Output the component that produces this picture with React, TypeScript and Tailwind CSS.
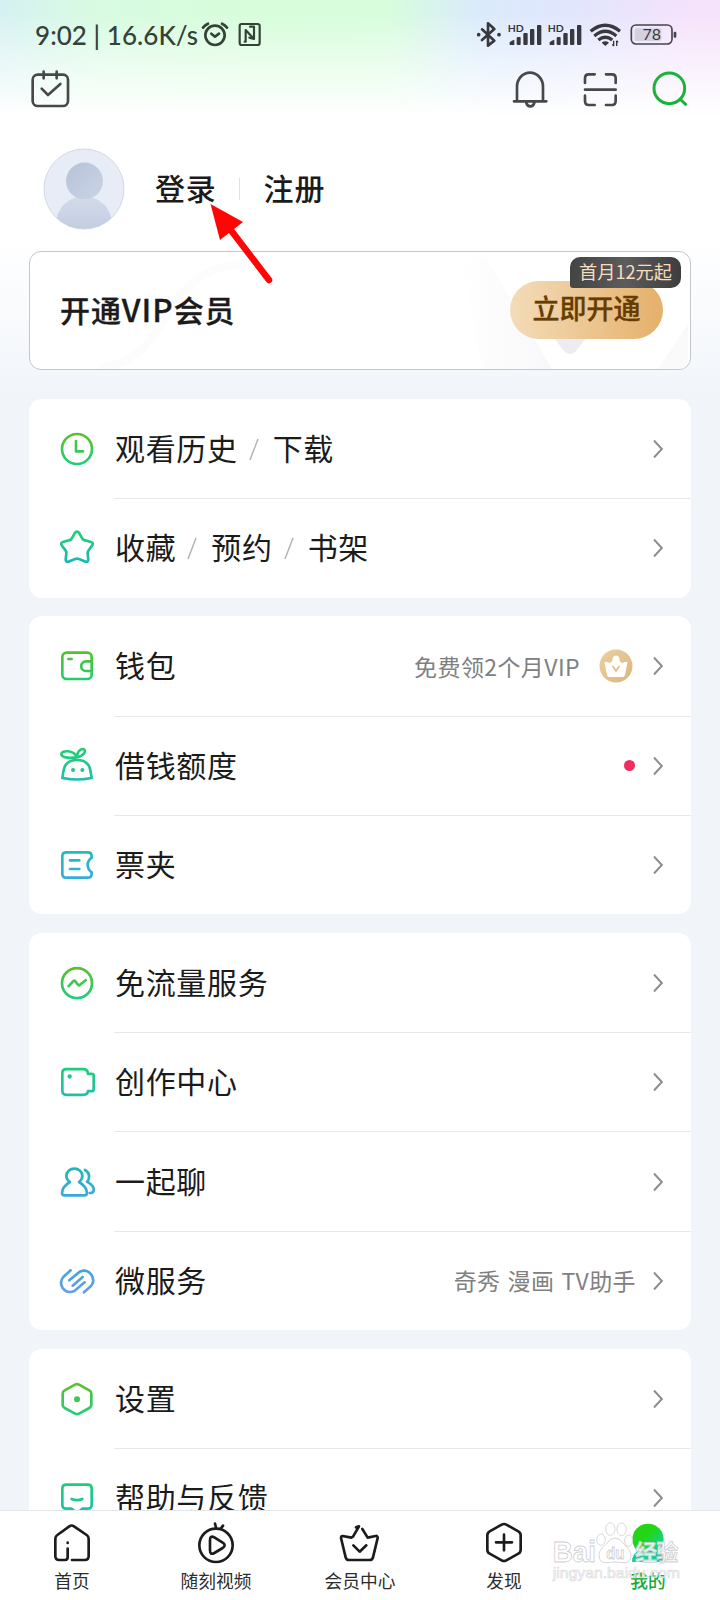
import type { ReactNode } from "react";

type IconProps = {
  viewBox: string;
  from: string;
  to: string;
  id: string;
  children: ReactNode;
};

type RowProps = {
  icon: ReactNode;
  labels: string[];
  extra?: ReactNode;
};

// Outline icon with a vertical gradient stroke
function GradientIcon({ viewBox, from, to, id, children }: IconProps) {
  const top = Number(viewBox.split(" ")[1]);

  return (
    <svg
      viewBox={viewBox}
      className="h-12 w-12 shrink-0"
      fill="none"
      stroke={`url(#${id})`}
      strokeWidth="8"
      strokeLinecap="round"
      strokeLinejoin="round"
    >
      <defs>
        <linearGradient
          id={id}
          gradientUnits="userSpaceOnUse"
          x1="0"
          x2="0"
          y1={top + 25}
          y2={top + 119}
        >
          <stop stopColor={from} />
          <stop offset="1" stopColor={to} />
        </linearGradient>
      </defs>
      {children}
    </svg>
  );
}

function LineIcon({
  viewBox,
  color = "#48484a",
  children,
}: {
  viewBox: string;
  color?: string;
  children: ReactNode;
}) {
  return (
    <svg
      viewBox={viewBox}
      className="h-12 w-12 shrink-0"
      fill="none"
      stroke={color}
      strokeWidth="8"
      strokeLinecap="round"
      strokeLinejoin="round"
    >
      {children}
    </svg>
  );
}

function Signal() {
  return (
    <svg viewBox="441 60 108 90" className="h-[30px] w-9" fill="#38383f">
      <text
        x="443"
        y="96"
        fontSize="30"
        fontWeight="700"
        fontFamily="Lato"
        textLength="48"
        lengthAdjust="spacingAndGlyphs"
      >
        HD
      </text>
      <path d="M449 135v-8q6-6 14-8v16z" />
      <rect x="470" y="111" width="12" height="24" rx="3" />
      <rect x="490" y="99" width="13" height="36" rx="3" />
      <rect x="510" y="87" width="13" height="48" rx="3" />
      <rect x="531" y="75" width="13" height="60" rx="3" />
    </svg>
  );
}

function StatusBar() {
  return (
    <div className="flex h-[65px] items-start pt-5 pr-[41px] pl-[35px] text-[#344238]">
      <span className="w-[165px] font-[Lato] text-[26px] leading-[30px] font-medium tracking-[0.05px] whitespace-nowrap">
        9:02 | 16.6K/s
      </span>
      <svg
        viewBox="600 60 192 90"
        className="h-[30px] w-16"
        fill="none"
        stroke="currentColor"
        strokeWidth="8"
        strokeLinecap="round"
        strokeLinejoin="round"
      >
        <circle cx="645" cy="106" r="29" />
        <path d="M609 83Q615 75 624 71M666 71Q675 75 681 83M634 101l11 9 12-9" />
        <rect x="719" y="72" width="60" height="63" rx="6" strokeWidth="6.500" />
        <path
          d="M737 125V90l25 27V80H750M737 125h-3M762 117l-14-4"
          strokeWidth="6.500"
        />
      </svg>

      <div className="ml-auto flex">
        <svg
          viewBox="345 60 84 90"
          className="h-[30px] w-7"
          fill="none"
          stroke="#38383f"
          strokeWidth="8"
          strokeLinejoin="round"
          strokeLinecap="round"
        >
          <path d="M366 88l37 34-19 15V70l19 17-37 33" />
          <path d="M356 104h.1M417 104h.1" strokeWidth="11" />
        </svg>
        <div className="ml-1">
          <Signal />
        </div>
        <div className="ml-1">
          <Signal />
        </div>
        <svg
          viewBox="687 60 96 90"
          className="ml-1.5 h-[30px] w-8"
          fill="none"
          stroke="#38383f"
          strokeWidth="10"
        >
          <path d="M692 94Q736 58 780 94M703 108Q736 80 769 108M715 120Q736 103 757 120" />
          <path d="M725 128q11-8 22 0l-11 10z" fill="#38383f" stroke="none" />
          <path d="M761 122v16M757 133l4 5M770 138v-16M774 127l-4-5" strokeWidth="4" />
        </svg>
        <svg viewBox="807 60 150 90" className="ml-2 h-[30px] w-[50px]">
          <rect x="824" y="85" width="80" height="38" rx="5" fill="#d5d0e0" />
          <rect
            x="814"
            y="75"
            width="122"
            height="57"
            rx="14"
            fill="none"
            stroke="#45454c"
            strokeWidth="5"
          />
          <rect x="941" y="95" width="8" height="18" rx="3" fill="#45454c" />
          <text
            x="875"
            y="121"
            fontSize="48"
            textAnchor="middle"
            fill="#38383f"
            fontFamily="Lato"
          >
            78
          </text>
        </svg>
      </div>
    </div>
  );
}

function Toolbar() {
  return (
    <div className="flex h-12 items-center justify-between px-[26px]">
      <LineIcon viewBox="78 195 144 144">
        <rect x="98" y="224" width="106" height="94" rx="15" />
        <path d="M131 215v20M170 215v20M125 266l19 19 37-33" />
      </LineIcon>
      <div className="flex gap-[22px]">
        <LineIcon viewBox="438 195 144 144">
          <path d="M471 303v-43a39 42 0 0 1 78 0v43M462 304h97M499 309q3 10 12 10t12-10" />
        </LineIcon>
        <LineIcon viewBox="648 195 144 144">
          <path d="M704 223h-18q-11 0-11 12v14M738 223h18q11 0 11 12v14M675 287v16q0 12 11 12h18M767 287v16q0 12-11 12h-18M675 269h92" />
        </LineIcon>
        <LineIcon viewBox="858 195 144 144" color="#1ab13c">
          <circle cx="928" cy="265" r="46" strokeWidth="9" />
          <path d="M963 300l14 13" strokeWidth="9" />
        </LineIcon>
      </div>
    </div>
  );
}

function Profile() {
  return (
    <div className="flex h-[138px] items-center pt-[14px] pl-[43px] text-[30px] leading-[44px] font-medium tracking-[0.8px] text-[#1b1b1b]">
      <svg viewBox="0 0 82 82" className="h-[82px] w-[82px]">
        <defs>
          <clipPath id="avatar-clip">
            <circle cx="41" cy="41" r="40" />
          </clipPath>
          <linearGradient id="avatar-head" x1="0" x2="1" y1="0" y2="1">
            <stop stopColor="#b7c2d8" />
            <stop offset="1" stopColor="#cbd4e6" />
          </linearGradient>
          <linearGradient id="avatar-body" x1="0" x2="0" y1="0" y2="1">
            <stop stopColor="#d3dbea" />
            <stop offset="1" stopColor="#b9c4db" />
          </linearGradient>
        </defs>
        <circle cx="41" cy="41" r="40" fill="#e7ecf6" stroke="#d3d9e4" />
        <g clipPath="url(#avatar-clip)">
          <circle cx="41" cy="76" r="28" fill="url(#avatar-body)" />
          <circle cx="41.500" cy="33" r="18.500" fill="url(#avatar-head)" />
        </g>
      </svg>
      <span className="ml-[30px] pb-[5px]">登录</span>
      <span className="ml-[22px] h-[22px] w-px bg-[#e2e2e4]" />
      <span className="ml-[24px] pb-[5px]">注册</span>
    </div>
  );
}

function VipCard() {
  return (
    <div className="relative mx-[29px] flex h-[119px] items-center justify-between rounded-xl border border-[#c4c6ca] bg-white pr-[27px] pl-[30px]">
      <svg viewBox="0 0 660 117" className="absolute inset-0 h-full w-full">
        <defs>
          <linearGradient id="vip-shade" x1="0" x2="1" y1="0" y2="0">
            <stop stopColor="#ffffff" />
            <stop offset="1" stopColor="#f8f8fa" />
          </linearGradient>
        </defs>
        <path d="M430 5h26L522 117h-70z" fill="url(#vip-shade)" />
        <path d="M524 86h32q-4 5-9 12-7 8-14 0-5-7-9-12z" fill="#ecedf3" />
        <path d="M628 117l30-45v35q0 10-10 10z" fill="#fafafb" />
        <path
          d="M70 115C145 110 125 15 215 12"
          fill="none"
          stroke="#fcfcfc"
          strokeWidth="8"
        />
      </svg>
      <span className="relative pb-[3px] text-[30px] font-medium text-[#1b1b1b] [-webkit-text-stroke:0.3px_#1b1b1b]">
        <span className="tracking-[0.9px]">开通</span>
        <span className="text-[31.5px] tracking-[1px]">VIP</span>
        <span className="tracking-[0.9px]">会员</span>
      </span>
      <button className="relative -mt-px h-[58px] w-[153px] rounded-full bg-gradient-to-r from-[#f3dcb9] to-[#e5b06a] pb-[3px] text-[27px] font-medium text-[#663c00] [-webkit-text-stroke:0.3px_#663c00]">
        立即开通
      </button>
      <span className="absolute top-[5px] right-[9px] flex h-[31px] w-[111px] items-center justify-center rounded-t-[10px] rounded-br-[10px] rounded-bl-[3px] bg-gradient-to-r from-[#444444] via-[#5c5c5c] to-[#3d3d3d] pb-px text-[18.2px] text-[#f8dcbc]">
        首月12元起
      </span>
    </div>
  );
}

function Row({ icon, labels, extra }: RowProps) {
  return (
    <div className="flex h-[99.3px] pl-6">
      <div className="flex items-center pt-px">{icon}</div>
      <div className="ml-[13px] flex flex-1 items-center border-t border-[#e6e8ea] pr-7 group-first:border-t-transparent">
        {labels.map((label, i) => (
          <span key={label} className="flex items-center">
            {i > 0 && (
              <svg viewBox="0 0 35 30" className="h-[30px] w-[35px]">
                <path d="M13 26L21 5" stroke="#b4b4b4" strokeWidth="1.500" />
              </svg>
            )}
            <span className="pb-1 pl-px text-[30px] leading-[44px] tracking-[0.67px] text-[#1b1b1b] -mr-px">
              {label}
            </span>
          </span>
        ))}
        <div className="ml-auto flex items-center text-[23px] text-[#808080]">
          {extra}
          <svg
            viewBox="0 0 10 20"
            className="h-5 w-2.5"
            fill="none"
            stroke="#8f8f8f"
            strokeWidth="2"
          >
            <path d="M1 1.500L8.800 10 1 18.500" />
          </svg>
        </div>
      </div>
    </div>
  );
}

function Card({ rows }: { rows: RowProps[] }) {
  return (
    <section className="mx-[29px] mb-[18.7px] shrink-0 rounded-[13px] bg-white">
      {rows.map((row) => (
        <div key={row.labels[0]} className="group">
          <Row {...row} />
        </div>
      ))}
    </section>
  );
}

const CARDS: RowProps[][] = [
  [
    {
      labels: ["观看历史", "下载"],
      icon: (
        <GradientIcon id="history" viewBox="99 104 144 144" from="#5cc02a" to="#1fce7c">
          <circle cx="171" cy="176" r="45" />
          <path d="M168 152v31h21" />
        </GradientIcon>
      ),
    },
    {
      labels: ["收藏", "预约", "书架"],
      icon: (
        <GradientIcon id="star" viewBox="99 402 144 144" from="#1fce74" to="#18b8b8">
          <path d="M164 430Q171 420 178 430L187 446Q190 450 195 451L213 456Q222 459 216 467L205 482Q202 486 203 491L205 508Q205 517 197 515L177 507Q171 505 165 507L145 515Q137 517 137 508L139 491Q140 486 137 482L126 467Q120 459 129 456L147 451Q152 450 155 446Z" />
        </GradientIcon>
      ),
    },
  ],
  [
    {
      labels: ["钱包"],
      icon: (
        <GradientIcon id="wallet" viewBox="99 97 144 144" from="#55c22a" to="#1fce74">
          <rect x="127" y="129" width="88" height="79" rx="13" />
          <path d="M213 155h-15a14 14 0 0 0 0 29h15M145 148h10" />
        </GradientIcon>
      ),
      extra: (
        <>
          <span className="pb-px tracking-[0.4px]">免费领2个月VIP</span>
          <svg viewBox="0 0 34 34" className="mr-5 ml-[19px] h-[34px] w-[34px]">
            <defs>
              <linearGradient id="crown" x1="0" x2="1" y1="0" y2="1">
                <stop stopColor="#ecd0a0" />
                <stop offset="1" stopColor="#d9b67f" />
              </linearGradient>
            </defs>
            <circle cx="17" cy="17" r="16.500" fill="url(#crown)" />
            <path
              d="M6 13l5 1.500 3-2.500v-2a3 3 0 0 1 6 0v2l3 2.500 5-1.500-2.500 13q-.3 1.500-2 1.500H10.500q-1.700 0-2-1.500z"
              fill="#fff"
              stroke="#fff"
              strokeLinejoin="round"
            />
            <path d="M13.500 17l3.500 5 3.500-5" fill="none" stroke="#e0bf8c" strokeWidth="1.800" />
          </svg>
        </>
      ),
    },
    {
      labels: ["借钱额度"],
      icon: (
        <GradientIcon id="loan" viewBox="99 395 144 144" from="#1fce74" to="#20bfae">
          <path d="M127 503C131 486 127 449 171 449S211 486 215 503Q171 512 127 503Z" />
          <path d="M170 441C160 443 124 445 124 431 124 420 162 417 170 441ZM170 441C172 425 180 416 190 416 201 421 192 436 170 441Z" />
          <path d="M159 479h.1M187 479h.1" strokeWidth="12" />
        </GradientIcon>
      ),
      extra: <span className="mr-[18px] h-[11px] w-[11px] rounded-full bg-[#f02d5e]" />,
    },
    {
      labels: ["票夹"],
      icon: (
        <GradientIcon id="ticket" viewBox="99 693 144 144" from="#20bdb8" to="#38aadf">
          <path d="M215 743v-4q0-12-12-12h-64q-12 0-12 12v52q0 12 12 12h64q12 0 12-12v-4Q203 778 203 765T215 743ZM150 751h28M150 777h28" />
        </GradientIcon>
      ),
    },
  ],
  [
    {
      labels: ["免流量服务"],
      icon: (
        <GradientIcon id="traffic" viewBox="99 86.5 144 144" from="#5cc02a" to="#1fce7c">
          <circle cx="171" cy="159" r="45" />
          <path d="M146 168L160 153Q163 150 166 153L174 164Q177 167 180 164L197 150" />
        </GradientIcon>
      ),
    },
    {
      labels: ["创作中心"],
      icon: (
        <GradientIcon id="creator" viewBox="99 384.5 144 144" from="#1fce74" to="#20bfae">
          <path d="M139 418h51q13 0 14 14h11q6 0 6 6v40q0 6-6 6h-11q-1 11-14 11h-51q-12 0-12-12v-53q0-12 12-12Z" />
          <path d="M149 440h.1" strokeWidth="13" />
        </GradientIcon>
      ),
    },
    {
      labels: ["一起聊"],
      icon: (
        <GradientIcon id="chat" viewBox="99 682 144 144" from="#20b8b0" to="#3aa8e4">
          <path d="M150 754Q139 746 139 736A24 22 0 0 1 187 736Q187 746 177 754 201 768 201 787 201 794 193 794H134Q126 794 126 787 126 768 150 754Z" />
          <path d="M195 718Q209 726 207 741 206 750 201 753 224 766 221 780 219 788 209 787" />
        </GradientIcon>
      ),
    },
    {
      labels: ["微服务"],
      icon: (
        <GradientIcon id="services" viewBox="99 980 144 144" from="#38a6e0" to="#729be6">
          <path d="M152 1020L130 1040Q117 1055 128 1073 141 1091 163 1082L194 1056M192 1086L213 1067Q226 1052 214 1033 201 1015 179 1024L148 1050M158 1066L188 1040" />
        </GradientIcon>
      ),
      extra: (
        <span className="mr-[17px] pb-px tracking-[0.4px] [word-spacing:1.500px]">
          奇秀 漫画 TV助手
        </span>
      ),
    },
  ],
  [
    {
      labels: ["设置"],
      icon: (
        <GradientIcon id="settings" viewBox="99 104 144 144" from="#5cc02a" to="#1fce7c">
          <path d="M165 133Q171 130 177 133L208 150Q214 153 214 160V194Q214 200 208 203L177 220Q171 223 165 220L134 203Q128 200 128 194V160Q128 153 134 150Z" />
          <path d="M171 177h.1" strokeWidth="18" />
        </GradientIcon>
      ),
    },
    {
      labels: ["帮助与反馈"],
      icon: (
        <GradientIcon id="feedback" viewBox="99 402 144 144" from="#1fce74" to="#20bfae">
          <path d="M139 434h64q12 0 12 12v48q0 12-12 12h-16l-16 14-16-14h-16q-12 0-12-12v-48q0-12 12-12ZM155 477q16 7 32 0" />
        </GradientIcon>
      ),
    },
  ],
];

const TABS = [
  {
    label: "首页",
    icon: (
      <LineIcon viewBox="84 537 144 144" color="#1c1c1c">
        <path d="M143 626v26q0 8-8 8h-17q-12 0-12-12v-52q0-7 6-11l36-26q7-5 14 0l38 26q6 4 6 11v52q0 12-12 12h-38M143 608v1" />
      </LineIcon>
    ),
  },
  {
    label: "随刻视频",
    icon: (
      <LineIcon viewBox="516 537 144 144" color="#1c1c1c">
        <circle cx="588" cy="616" r="50" />
        <path d="M570 600q0-15 13-8l25 16q12 8 0 16l-25 15q-13 7-13-8ZM588 563l-3-12M603 565l6-8" />
      </LineIcon>
    ),
  },
  {
    label: "会员中心",
    icon: (
      <LineIcon viewBox="108 117 144 144" color="#1c1c1c">
        <path d="M168 142l9-3-18 31-5 3-26-5q-5 0-5 6l14 58q2 8 10 8h62q8 0 10-8l14-58q0-7-6-6l-24 5-16-26M160 196l19 19 20-19" />
      </LineIcon>
    ),
  },
  {
    label: "发现",
    icon: (
      <LineIcon viewBox="540 117 144 144" color="#1c1c1c">
        <path d="M605 134q7-4 14 0l36 20q7 4 7 12v43q0 8-7 12l-36 20q-7 4-14 0l-36-20q-7-4-7-12v-43q0-8 7-12ZM612 164v47M588 187h48" />
      </LineIcon>
    ),
  },
  {
    label: "我的",
    active: true,
    icon: (
      <svg viewBox="972 117 144 144" className="h-12 w-12">
        <defs>
          <linearGradient id="mine" x1="0" x2="1" y1="0" y2="1">
            <stop offset="0.4" stopColor="#22d615" />
            <stop offset="1" stopColor="#0fd0c8" />
          </linearGradient>
        </defs>
        <circle cx="1044" cy="178" r="47" fill="url(#mine)" />
        <path d="M996 246q0-30 28-36h40q28 6 28 36Z" fill="#12cf9c" />
      </svg>
    ),
  },
];

function TabBar() {
  return (
    <nav className="relative grid h-[90px] shrink-0 grid-cols-5 border-t border-[#e2e5e9] bg-white pt-2">
      {TABS.map((tab) => (
        <div key={tab.label} className="flex flex-col items-center">
          {tab.icon}
          <span
            className={
              tab.active
                ? "text-[17.7px] leading-[26px] font-medium text-[#12ad38]"
                : "text-[17.7px] leading-[26px] text-[#2c2c2c]"
            }
          >
            {tab.label}
          </span>
        </div>
      ))}
    </nav>
  );
}

function Watermark() {
  return (
    <svg
      viewBox="750 120 400 190"
      className="absolute top-[1520px] left-[550px] h-[63.3px] w-[133.3px]"
      fill="#ffffff"
      fillOpacity="0.85"
      stroke="#cfcfd2"
      strokeWidth="2.500"
      fontFamily="'Liberation Sans', 'Noto Sans CJK SC', sans-serif"
      fontWeight="700"
    >
      <text x="758" y="247" fontSize="86" textLength="130" lengthAdjust="spacingAndGlyphs">
        Bai
      </text>
      <ellipse cx="903" cy="179" rx="13" ry="17" />
      <ellipse cx="931" cy="147" rx="14" ry="19" />
      <ellipse cx="965" cy="148" rx="14" ry="19" />
      <ellipse cx="986" cy="182" rx="12" ry="17" />
      <path d="M945 174q15 0 26 18 24 20 22 36-2 22-24 20-24-4-48 0-22 2-24-20-2-16 22-36 11-18 26-18Z" />
      <text x="919" y="236" fontSize="48" textLength="54" lengthAdjust="spacingAndGlyphs">
        du
      </text>
      <text x="1005" y="241" fontSize="66" textLength="130">
        经验
      </text>
      <text
        x="758"
        y="294"
        fontSize="43"
        fontWeight="400"
        textLength="382"
        lengthAdjust="spacingAndGlyphs"
        fillOpacity="0.5"
        strokeWidth="2"
        stroke="#dcdcde"
      >
        jingyan.baidu.com
      </text>
    </svg>
  );
}

export default function App() {
  return (
    <div className="relative flex h-[1600px] w-[720px] flex-col overflow-hidden bg-[#f1f5fa] font-['Noto_Sans_CJK_SC',sans-serif]">
      <main className="min-h-0 flex-1 overflow-hidden">
        <header className="h-[399px] bg-gradient-to-b from-white from-60% to-[#f1f5fa]">
          <div className="h-[130px] bg-[linear-gradient(to_bottom,transparent_10%,white_90%),linear-gradient(to_right,#d6f1f2_0%,#d8fbe2_13%,#d7fddb_35%,#d7fddd_54%,#daebfb_66%,#e2e6fd_80%,#f5e2fb_96%)]">
            <StatusBar />
            <Toolbar />
          </div>
          <div className="-mt-[17px]">
            <Profile />
          </div>
          <VipCard />
        </header>
        {CARDS.map((rows) => (
          <Card key={rows[0].labels[0]} rows={rows} />
        ))}
      </main>
      <TabBar />
      <Watermark />

      {/* pointer to the login link */}
      <svg viewBox="0 0 70 85" className="absolute top-[200px] left-[206px] h-[85px] w-[70px]">
        <path d="M4.500 4L37 22 28 29 14 40Z" fill="#ff0505" />
        <path d="M24 29L63 80" stroke="#ff0505" strokeWidth="6.500" strokeLinecap="round" />
      </svg>
    </div>
  );
}
